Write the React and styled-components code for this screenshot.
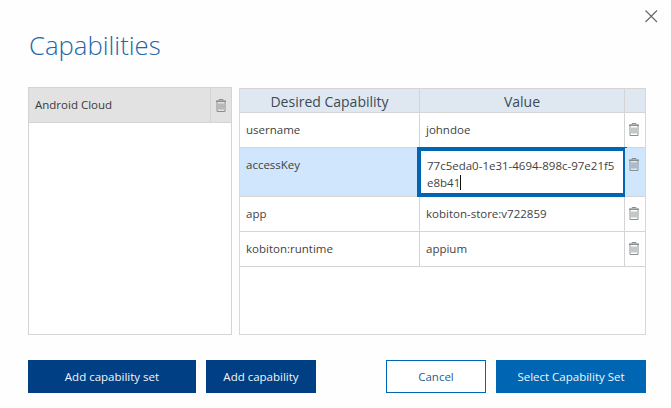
import React from "react";
import styled, { createGlobalStyle } from "styled-components";

const Global = createGlobalStyle`
  html, body { margin: 0; padding: 0; background: #fff; }
  * { box-sizing: border-box; }
  body { font-family: "Open Sans", "Noto Sans", sans-serif; color: #333; }
`;

const Dialog = styled.div`
  position: relative;
  width: 671px;
  height: 408px;
  padding: 25px 25px 0 28px;
  background: #fefefe;
  display: flex;
  flex-direction: column;
`;
const Close = styled.button`
  position: absolute;
  top: 8px;
  right: 12px;
  width: 16px;
  height: 16px;
  padding: 0;
  border: 0;
  background: none;
  display: flex;
`;
const Title = styled.h1`
  margin: 0 0 0 1px;
  height: 41px;
  font-size: 25.7px;
  line-height: 41px;
  font-weight: 300;
  color: #1c68a8;
`;
const Panels = styled.div`
  margin-top: 21px;
  height: 248px;
  display: flex;
  gap: 7px;
`;
const SetList = styled.div`
  width: 204px;
  border: 1px solid #d4d4d4;
  background: #fff;
`;
const SetRow = styled.div`
  height: 35px;
  display: flex;
  background: #e2e2e2;
  border-bottom: 1px solid #d4d4d4;
`;
const SetName = styled.div`
  flex: 1;
  padding-left: 6px;
  font-size: 11.5px;
  line-height: 34px;
  color: #3a3a3a;
  border-right: 1px solid #d4d4d4;
`;
const SetDelete = styled.div`
  width: 20px;
  display: flex;
  align-items: center;
  justify-content: center;
`;
const TablePanel = styled.div`
  width: 407px;
  margin-top: 1px;
  border: 1px solid #d8d8d8;
  border-top: 0;
  background: #fff;
`;
const Grid = styled.div`
  display: grid;
  grid-template-columns: 180px 205px 20px;
  grid-template-rows: 25px 35px 49px 35px 35px;
  border-right: 2px solid #d4d4d4;
  width: 405px;
`;
const HeadCell = styled.div`
  background: #dfe8f1;
  border-top: 1px solid #d4d4d4;
  border-bottom: 1px solid #d4d4d4;
  border-right: ${p => (p.$last ? "0" : "1px solid #d4d4d4")};
  font-size: 14px;
  line-height: 25px;
  text-align: center;
  color: #3c4a58;
`;
const Cell = styled.div`
  position: relative;
  background: ${p => (p.$selected ? "#cfe6fc" : "#fff")};
  border-bottom: 1px solid #d4d4d4;
  border-right: ${p => (p.$last ? "0" : "1px solid #d4d4d4")};
  padding: 9px 0 0 6px;
  font-size: 11.5px;
  line-height: 16px;
  color: #3f3f3f;
`;
const DeleteCell = styled(Cell)`
  padding: 10px 0 0 4px;
  border-right: 0;
`;
const Editor = styled.div`
  position: absolute;
  top: -1px;
  left: -3px;
  right: -3px;
  bottom: -1px;
  border: 4px solid #0065b3;
  background: #fff;
  padding: 6px 5px 0 6px;
  font-size: 11.5px;
  line-height: 17px;
  word-break: break-all;
  color: #3f3f3f;
`;
const Caret = styled.span`
  display: inline-block;
  width: 1px;
  height: 15px;
  background: #111;
  vertical-align: -3px;
`;
const Footer = styled.div`
  margin-top: 25px;
  display: flex;
  align-items: flex-start;
`;
const Button = styled.button`
  height: 33px;
  width: ${p => p.$w}px;
  margin-left: ${p => p.$gap || 0}px;
  font-family: inherit;
  font-size: 11.5px;
  padding: 0;
  border: 1px solid ${p => (p.$kind === "dark" ? "#003f84" : "#0065b3")};
  background: ${p => (p.$kind === "dark" ? "#003f84" : p.$kind === "primary" ? "#0065b3" : "#fff")};
  color: ${p => (p.$kind === "outline" ? "#1e5f99" : "#f2f6fa")};
`;

const Trash = () => (
  <svg width="10" height="13" viewBox="0 0 10 13" fill="none" stroke="#8a8f92" strokeWidth="1" style={{ display: "block" }}>
    <path d="M0 2.2h10" strokeWidth="1.6" />
    <path d="M3 1.5V.5h4v1" />
    <path d="M1 2.5v10h8v-10" />
    <path d="M3 4.5v6M5 4.5v6M7 4.5v6" />
  </svg>
);

const rows = [
  { name: "username", value: "johndoe" },
  { name: "accessKey", value: "77c5eda0-1e31-4694-898c-97e21f5e8b41", editing: true },
  { name: "app", value: "kobiton-store:v722859" },
  { name: "kobiton:runtime", value: "appium" },
];

export default function App() {
  return (
    <Dialog>
      <Global />
      <Close aria-label="Close">
        <svg width="16" height="16" viewBox="0 0 16 16" stroke="#666" strokeWidth="1.1" fill="none">
          <path d="M2.5 2.5l11.5 11.5M14 2.5L2.5 14" />
        </svg>
      </Close>
      <Title>Capabilities</Title>
      <Panels>
        <SetList>
          <SetRow>
            <SetName>Android Cloud</SetName>
            <SetDelete><Trash /></SetDelete>
          </SetRow>
        </SetList>
        <TablePanel>
          <Grid>
            <HeadCell>Desired Capability</HeadCell>
            <HeadCell>Value</HeadCell>
            <HeadCell $last />
            {rows.map(r => (
              <React.Fragment key={r.name}>
                <Cell $selected={r.editing}>{r.name}</Cell>
                <Cell $selected={r.editing}>
                  {r.editing ? (
                    <Editor>{r.value}<Caret /></Editor>
                  ) : r.value}
                </Cell>
                <DeleteCell $selected={r.editing} $last><Trash /></DeleteCell>
              </React.Fragment>
            ))}
          </Grid>
        </TablePanel>
      </Panels>
      <Footer>
        <Button $kind="dark" $w={168}>Add capability set</Button>
        <Button $kind="dark" $w={110} $gap={10}>Add capability</Button>
        <Button $kind="outline" $w={100} $gap={70}>Cancel</Button>
        <Button $kind="primary" $w={150} $gap={10}>Select Capability Set</Button>
      </Footer>
    </Dialog>
  );
}
